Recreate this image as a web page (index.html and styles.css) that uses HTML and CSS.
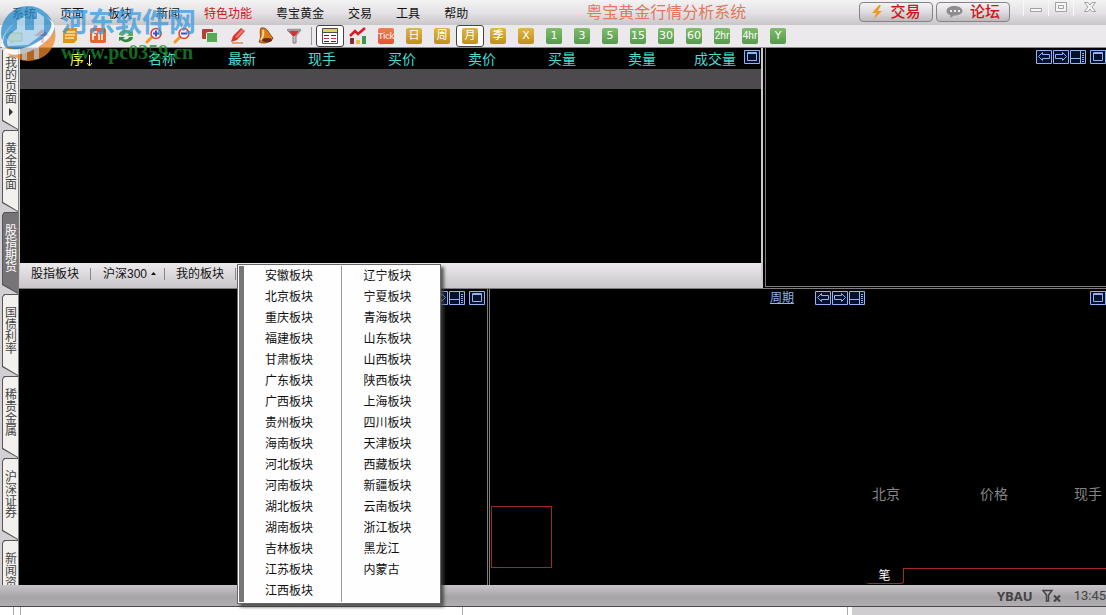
FILE: index.html
```html
<!DOCTYPE html>
<html lang="zh-CN">
<head>
    <meta charset="UTF-8">
    <meta name="viewport" content="width=device-width, initial-scale=1.0">
    <title>粤宝黄金行情分析系统</title>
    <link rel="stylesheet" href="styles.css">
</head>
<body>
    <!-- shared symbols -->
    <svg class="symbols" aria-hidden="true">
        <symbol id="i-prev" viewBox="0 0 16 14"><path d="M.5.5h15v13H.5zM2.500 6.500l4-4v2h7v4h-7v2z"/></symbol>
        <symbol id="i-next" viewBox="0 0 16 14"><path d="M.5.5h15v13H.5zM13.500 6.500l-4-4v2h-7v4h7v2z"/></symbol>
        <symbol id="i-split" viewBox="0 0 16 14"><path d="M.5.5h15v13H.5zM1 8.500h9.500M10.500 1v12M12 3.500h2M12 5.500h2M12 7.500h2M12 9.500h2M12 11.500h2"/></symbol>
        <symbol id="i-max" viewBox="0 0 16 14"><path d="M.5.5h15v13H.5zM3.500 2.500h9v8h-9zM3.500 3.500h9"/></symbol>
    </svg>

    <header class="titlebar">
        <nav class="menu">
            <button>系统</button>
            <button>页面</button>
            <button>板块</button>
            <button>新闻</button>
            <button class="hot">特色功能</button>
            <button>粤宝黄金</button>
            <button>交易</button>
            <button>工具</button>
            <button>帮助</button>
        </nav>
        <h1>粤宝黄金行情分析系统</h1>
        <div class="actions">
            <button class="pill">
                <svg width="12" height="16" viewBox="0 0 12 16"><path d="M8 1L1 9h4l-2 6 8-8H7l3-6z" fill="#f09a28"/></svg>
                交易
            </button>
            <button class="pill">
                <svg width="17" height="14" viewBox="0 0 17 14"><path d="M8.500 1C4 1 .5 3 .5 6c0 2 1.500 3.500 4 4.200L4 13l4-2.500c5 0 8.500-1.800 8.500-4.500S13 1 8.500 1z" fill="#8e8c8e"/><path d="M4 5h2v2H4zM8 5h2v2H8zM12 5h2v2h-2z" fill="#eee"/></svg>
                论坛
            </button>
        </div>
        <div class="window-controls">
            <button aria-label="最小化"><svg width="14" height="14" viewBox="0 0 14 14"><path d="M1.500 8.500h11v3h-11z"/></svg></button>
            <button aria-label="最大化"><svg width="14" height="14" viewBox="0 0 14 14"><path d="M1.500 2.500h11v9h-11zM4.500 5.500h5v3h-5z"/></svg></button>
            <button aria-label="关闭"><svg width="14" height="14" viewBox="0 0 14 14"><path d="M1.500 2.500h3.500l2 2.500 2-2.500h3.500L9 7l3.500 4.500H9L7 9l-2 2.500H1.500L5 7z"/></svg></button>
        </div>
    </header>

    <div class="toolbar">
        <button aria-label="返回"><svg width="18" height="18" viewBox="0 0 18 18"><path d="M1 9l6-5v2h10v8H7v2z" fill="#d8d880" stroke="#7a9440"/></svg></button>
        <button aria-label="主页"><svg width="18" height="18" viewBox="0 0 18 18"><path d="M3 9h12v7H3z" fill="#f2d8dc"/><path d="M9 2L1 9h16z" fill="#d04860"/><path d="M8 11h3v5H8z" fill="#a03048"/></svg></button>
        <button aria-label="公告"><svg width="18" height="18" viewBox="0 0 18 18"><path d="M4 1h12v12l-3 3H2V4z" fill="#e8921e"/><path d="M5 5h9M4 8h10M4 11h9" stroke="#fbe3a0" stroke-width="1.500"/></svg></button>
        <button aria-label="F10"><svg width="18" height="18" viewBox="0 0 18 18"><rect x="1" y="1" width="16" height="15" rx="2" fill="#e8662c"/><path d="M4 13V5h4M4 8h3M10 5v8M13 5v8" fill="none" stroke="#fff" stroke-width="1.500"/></svg></button>
        <button aria-label="刷新"><svg width="18" height="18" viewBox="0 0 18 18"><path d="M2 8c0-5 9-7 12-3l2-1v5h-6l2-2c-3-2-6 0-6 2z" fill="#57b04c"/><path d="M16 10c0 5-9 7-12 3l-2 1V10h6l-2 2c3 1 6 0 6-2z" fill="#2e8b3c"/></svg></button>
        <button aria-label="放大"><svg width="18" height="18" viewBox="0 0 18 18"><path d="M7 10l-5 5" stroke="#f09a28" stroke-width="3" stroke-linecap="round"/><circle cx="11" cy="6.500" r="5" fill="#f6eef2" stroke="#d8403c" stroke-width="1.500"/><path d="M11 3.500v6M8 6.500h6" stroke="#3858b8" stroke-width="2"/></svg></button>
        <button aria-label="缩小"><svg width="18" height="18" viewBox="0 0 18 18"><path d="M7 10l-5 5" stroke="#f09a28" stroke-width="3" stroke-linecap="round"/><circle cx="11" cy="6.500" r="5" fill="#f6eef2" stroke="#d8403c" stroke-width="1.500"/><path d="M8 6.500h6" stroke="#3858b8" stroke-width="2"/></svg></button>
        <button aria-label="叠加"><svg width="18" height="18" viewBox="0 0 18 18"><rect x="1" y="2" width="11" height="10" rx="1" fill="#b8403c"/><rect x="5.500" y="5.500" width="11" height="10" rx="1" fill="#58a858" stroke="#e4f0e0"/></svg></button>
        <button aria-label="画线"><svg width="18" height="18" viewBox="0 0 18 18"><path d="M12 1l4 3-8 9-6 2 2-6z" fill="#d83430"/><path d="M13 2l2 2-7 7-2-1z" fill="#f07860"/><path d="M3 16h11" stroke="#e8a070" stroke-width="2"/></svg></button>
        <button aria-label="预警"><svg width="18" height="18" viewBox="0 0 18 18"><path d="M4 1c7-1 7 5 12 10-2 5-10 6-14 4 3-5 0-10 2-14z" fill="#d87c1c" stroke="#8e4818"/><path d="M6 3c1 4 0 7-2 10" fill="none" stroke="#fbd48c" stroke-width="2"/><ellipse cx="10" cy="13" rx="5" ry="2" fill="#6a2c18"/></svg></button>
        <button aria-label="筛选"><svg width="18" height="18" viewBox="0 0 18 18"><path d="M2 3l6 6v7h3V9l5-6z" fill="#c4c0c4" stroke="#868286"/><path d="M4 4h10l-4 5H8z" fill="#d83038"/><path d="M2 2.500h14" stroke="#999" stroke-width="1.500"/></svg></button>
        <span class="separator"></span>
        <button class="on" aria-label="报价列表"><svg width="18" height="18" viewBox="0 0 18 18"><path d="M1.500 1.500h15v15h-15z" fill="#fff" stroke="#48504c"/><path d="M2 2h14v3H2z" fill="#e4d448"/><path d="M1 5.500h16" stroke="#48504c"/><path d="M3 8.500h5M10 8.500h5M3 14.500h5M10 14.500h5" stroke="#333"/><path d="M3 11.500h5M10 11.500h5" stroke="#d03838"/></svg></button>
        <button aria-label="走势图"><svg width="18" height="18" viewBox="0 0 18 18"><path d="M1 9l5-5 3 3 7-6" fill="none" stroke="#d81c28" stroke-width="2.500"/><path d="M1 11h4v6H1z" fill="#7c3040"/><path d="M7 13h4v4H7z" fill="#e8c040"/><path d="M13 9h4v8h-4z" fill="#3c9850"/></svg></button>
        <button><span class="tile tick">Tick</span></button>
        <button><span class="tile gold">日</span></button>
        <button><span class="tile gold">周</span></button>
        <button class="on"><span class="tile gold">月</span></button>
        <button><span class="tile gold">季</span></button>
        <button><span class="tile gold">X</span></button>
        <button><span class="tile">1</span></button>
        <button><span class="tile">3</span></button>
        <button><span class="tile">5</span></button>
        <button><span class="tile">15</span></button>
        <button><span class="tile">30</span></button>
        <button><span class="tile">60</span></button>
        <button><span class="tile small">2hr</span></button>
        <button><span class="tile small">4hr</span></button>
        <button><span class="tile">Y</span></button>
    </div>

    <main class="workspace">
        <nav class="side-tabs">
            <button class="first"><span>我的页面</span><i></i></button>
            <button><span>黄金页面</span></button>
            <button class="active"><span>股指期货</span></button>
            <button><span>国债利率</span></button>
            <button><span>稀贵金属</span></button>
            <button><span>沪深证券</span></button>
            <button><span>新闻资</span></button>
        </nav>

        <div class="panels">
            <div class="upper">
                <section class="quotes">
                    <div class="quote-area">
                        <table>
                            <thead>
                                <tr>
                                    <th class="sorted">序<svg width="7" height="12" viewBox="0 0 7 12"><path d="M3.500 0v11M1 8l2.500 3L6 8" fill="none" stroke="#ffff50"/></svg></th>
                                    <th>名称</th>
                                    <th>最新</th>
                                    <th>现手</th>
                                    <th>买价</th>
                                    <th>卖价</th>
                                    <th>买量</th>
                                    <th>卖量</th>
                                    <th>成交量</th>
                                    <td class="tools"><button aria-label="最大化窗格"><svg class="tool" width="16" height="14"><use href="#i-max"/></svg></button></td>
                                </tr>
                            </thead>
                            <tbody>
                                <tr><td colspan="10"></td></tr>
                            </tbody>
                        </table>
                    </div>
                    <div class="sector-bar">
                        <button>股指板块</button>
                        <button>沪深300<i></i></button>
                        <button>我的板块</button>
                        <div class="region-menu">
                            <ul>
                                <li><button>安徽板块</button></li>
                                <li><button>北京板块</button></li>
                                <li><button>重庆板块</button></li>
                                <li><button>福建板块</button></li>
                                <li><button>甘肃板块</button></li>
                                <li><button>广东板块</button></li>
                                <li><button>广西板块</button></li>
                                <li><button>贵州板块</button></li>
                                <li><button>海南板块</button></li>
                                <li><button>河北板块</button></li>
                                <li><button>河南板块</button></li>
                                <li><button>湖北板块</button></li>
                                <li><button>湖南板块</button></li>
                                <li><button>吉林板块</button></li>
                                <li><button>江苏板块</button></li>
                                <li><button>江西板块</button></li>
                            </ul>
                            <ul>
                                <li><button>辽宁板块</button></li>
                                <li><button>宁夏板块</button></li>
                                <li><button>青海板块</button></li>
                                <li><button>山东板块</button></li>
                                <li><button>山西板块</button></li>
                                <li><button>陕西板块</button></li>
                                <li><button>上海板块</button></li>
                                <li><button>四川板块</button></li>
                                <li><button>天津板块</button></li>
                                <li><button>西藏板块</button></li>
                                <li><button>新疆板块</button></li>
                                <li><button>云南板块</button></li>
                                <li><button>浙江板块</button></li>
                                <li><button>黑龙江</button></li>
                                <li><button>内蒙古</button></li>
                            </ul>
                        </div>
                    </div>
                </section>
                <section class="side-chart">
                    <div class="pane-tools">
                        <button aria-label="后退"><svg class="tool" width="16" height="14"><use href="#i-prev"/></svg></button>
                        <button aria-label="前进"><svg class="tool" width="16" height="14"><use href="#i-next"/></svg></button>
                        <button aria-label="分栏"><svg class="tool" width="16" height="14"><use href="#i-split"/></svg></button>
                        <button class="max" aria-label="最大化窗格"><svg class="tool" width="16" height="14"><use href="#i-max"/></svg></button>
                    </div>
                </section>
            </div>

            <div class="lower">
                <section class="chart-left">
                    <div class="pane-tools">
                        <button aria-label="后退"><svg class="tool" width="16" height="14"><use href="#i-prev"/></svg></button>
                        <button aria-label="前进"><svg class="tool" width="16" height="14"><use href="#i-next"/></svg></button>
                        <button aria-label="分栏"><svg class="tool" width="16" height="14"><use href="#i-split"/></svg></button>
                        <button class="max" aria-label="最大化窗格"><svg class="tool" width="16" height="14"><use href="#i-max"/></svg></button>
                    </div>
                </section>
                <section class="chart-right">
                    <div class="chart-column">
                        <div class="pane-tools">
                            <a href="#">周期</a>
                            <button aria-label="后退"><svg class="tool" width="16" height="14"><use href="#i-prev"/></svg></button>
                            <button aria-label="前进"><svg class="tool" width="16" height="14"><use href="#i-next"/></svg></button>
                            <button aria-label="分栏"><svg class="tool" width="16" height="14"><use href="#i-split"/></svg></button>
                        </div>
                        <div class="marker"></div>
                    </div>
                    <div class="detail">
                        <div class="pane-tools">
                            <button aria-label="最大化窗格"><svg class="tool" width="16" height="14"><use href="#i-max"/></svg></button>
                        </div>
                        <div class="ticks-head"><span>北京</span><span>价格</span><span>现手</span></div>
                        <div class="detail-tabs"><button>笔</button><span></span></div>
                    </div>
                </section>
            </div>
        </div>
    </main>

    <footer class="statusbar">
        <b>YBAU</b>
        <svg width="19" height="14" viewBox="0 0 19 14"><path d="M1 1.500h9L6.500 6v6h-2V6z" fill="none" stroke="#444" stroke-width="1.500"/><path d="M12 6.500l6 6M18 6.500l-6 6" stroke="#444" stroke-width="2"/></svg>
        <time>13:45</time>
    </footer>
    <div class="under-strip"><span></span><span></span><span></span><span></span><span></span></div>

    <div class="watermark">
        <svg width="58" height="60" viewBox="0 0 58 60">
            <circle cx="28" cy="29" r="27" fill="#2a8fd0"/>
            <path d="M12 49c18 2 34-8 43-23 3 17-10 31-27 31-7 0-12-3-16-8z" fill="#f0892a"/>
            <path d="M4 43l10 2v10c-5-3-8-7-10-12z" fill="#f0892a"/>
            <path d="M17 17C5 26 0 38 5 43c8 7 33-1 43-14 6-8 4-14-4-16 10 3 13 8 8 17-9 15-36 26-47 18C-3 42 4 26 17 17z" fill="#fff"/>
            <path d="M17 17l8-5v14h9V15h3V8l7 5v16L28 41 8 42C5 36 9 30 17 25z" fill="#fff" opacity=".6"/>
            <path d="M22 47h5v9h-5zM34 43h5v12h-5z" fill="#fff" opacity=".8"/>
        </svg>
        <div>
            <strong>河东软件网</strong>
            <em>www.pc0359.cn</em>
        </div>
    </div>
</body>
</html>
```
FILE: styles.css
```css
:root {
    --line: #7e7c7e;
    --tool: #8fb4f0;
    --cyan: #48dcd4;
    --red: #a02828;
}

* {
    margin: 0;
    padding: 0;
    box-sizing: border-box;
}

body {
    display: flex;
    flex-direction: column;
    height: 100vh;
    overflow: hidden;
    position: relative;
    background: #000;
    color: #111;
    font: 12px/16px "Liberation Sans", "Noto Sans CJK SC", sans-serif;
}

button {
    border: none;
    background: none;
    font: inherit;
    color: inherit;
    white-space: nowrap;
}

svg {
    display: block;
}

.symbols {
    position: absolute;
    width: 0;
    height: 0;
}

/* title bar */
.titlebar {
    display: flex;
    height: 25px;
    background: linear-gradient(#f4f3f4, #e4e2e4 50%, #c8c6c8);
}

.menu {
    display: flex;
}

.menu button {
    padding: 2px 12px 0;
}

.menu .hot {
    color: #c81820;
}

.titlebar h1 {
    flex: 1;
    padding-left: 106px;
    font-size: 16px;
    font-weight: 400;
    line-height: 25px;
    color: #e2785c;
    white-space: nowrap;
}

.actions {
    display: flex;
    gap: 3px;
    padding: 2px 13px 0 0;
}

.pill {
    display: flex;
    align-items: center;
    justify-content: center;
    gap: 7px;
    width: 74px;
    height: 20px;
    border: 1px solid #858385;
    border-radius: 4px;
    background: linear-gradient(#f4f2f4, #dedcde 50%, #bcbabc);
    color: #d01418;
    font-size: 15px;
    font-weight: 500;
}

.window-controls {
    display: flex;
}

.window-controls button {
    display: flex;
    justify-content: center;
    width: 25px;
    height: 16px;
    border-left: 1px solid #f8f8f8;
}

.window-controls button:last-child {
    width: 33px;
}

.window-controls path {
    fill: #f6f6f6;
    stroke: #a2a0a2;
}

/* toolbar */
.toolbar {
    display: flex;
    height: 23px;
    background: #ebe9eb;
    border-bottom: 1px solid #8a888a;
}

.toolbar button {
    display: flex;
    align-items: center;
    justify-content: center;
    width: 28px;
    height: 22px;
}

.toolbar .on {
    border: 1px solid #444;
    border-radius: 3px;
    background: #fff;
}

.separator {
    width: 1px;
    margin: 2px 4px 2px 3px;
    background: #999;
}

.tile {
    width: 16px;
    height: 16px;
    border-radius: 2px;
    background: linear-gradient(#80bc6c, #559a4c);
    color: #fff;
    font: 11px/16px "DejaVu Sans", "Noto Sans CJK SC", sans-serif;
}

.tile.gold {
    background: linear-gradient(#dcb848, #c09018);
}

.tile.tick {
    background: linear-gradient(#f08050, #e85030);
    font: 9px/16px "Liberation Sans", sans-serif;
}

.tile.small {
    font: 10px/16px "Liberation Sans", sans-serif;
}

/* work area */
.workspace {
    flex: 1;
    display: flex;
    min-height: 0;
}

.side-tabs {
    flex: none;
    width: 19px;
    padding-left: 2px;
    overflow: hidden;
    background: #d2d0d4;
    border-right: 1px solid var(--line);
}

.side-tabs button {
    display: flex;
    flex-direction: column;
    align-items: flex-start;
    justify-content: flex-start;
    position: relative;
    width: 16px;
    height: 82px;
    padding: 13px 0 0 3px;
    background: #555;
    clip-path: polygon(0 3px, 2px 0, 100% 0, 100% 100%, 0 73px);
    color: #444;
    text-align: left;
}

.side-tabs button::before {
    content: '';
    position: absolute;
    inset: 1px 0 1px 1px;
    background: #f2f1ee;
    clip-path: polygon(0 2px, 2px 0, 100% 0, 100% 100%, 0 71px);
}

.side-tabs .active {
    color: #fff;
}

.side-tabs .active::before {
    background: #777477;
}

.side-tabs span {
    display: block;
    position: relative;
    width: 12px;
    line-height: 12px;
    white-space: normal;
    word-break: break-all;
}

.side-tabs .first {
    padding-top: 9px;
}

.side-tabs i {
    display: block;
    position: relative;
    margin: 3px 0 0 4px;
    width: 4px;
    height: 8px;
    background: #333;
    clip-path: polygon(0 0, 100% 50%, 0 100%);
}

.panels {
    flex: 1;
    display: flex;
    flex-direction: column;
    min-width: 0;
}

.upper {
    flex: 240;
    display: grid;
    grid-template-columns: 744fr 341fr;
    gap: 2px;
    min-height: 0;
    background: #000;
}

.quotes {
    display: flex;
    flex-direction: column;
    border: solid #cccacc;
    border-width: 0 2px 0 1px;
}

.quote-area {
    flex: 1;
}

.quotes table {
    width: 100%;
    table-layout: fixed;
    border-collapse: collapse;
}

.quotes th {
    width: 80px;
    height: 21px;
    color: var(--cyan);
    font-size: 14px;
    font-weight: 400;
    line-height: 20px;
    text-align: right;
    padding-right: 4px;
}

.quotes th.sorted {
    color: #ffff50;
    padding-right: 7px;
}

.sorted svg {
    display: inline-block;
    margin-left: 2px;
    vertical-align: -3px;
}

.tools {
    vertical-align: top;
    padding-top: 2px;
}

.tools button {
    display: block;
    margin: 0 1px 0 auto;
}

.quotes tbody td {
    height: 20px;
    background: #4c4a4c;
}

.tool {
    fill: none;
    stroke: var(--tool);
    background: #04102c;
}

.sector-bar {
    display: flex;
    align-items: center;
    height: 25px;
    padding-bottom: 3px;
    position: relative;
    background: linear-gradient(#eceaec, #c8c6c8);
}

.sector-bar > button {
    display: flex;
    align-items: center;
    height: 12px;
    padding: 0 11px;
    border-right: 1px solid #888;
}

.sector-bar > button:nth-child(2) {
    padding: 0 8px 0 12px;
}

.sector-bar i {
    margin-left: 4px;
    width: 5px;
    height: 3px;
    background: #111;
    clip-path: polygon(50% 0, 100% 100%, 0 100%);
}

.region-menu {
    position: absolute;
    top: 1px;
    left: 217px;
    z-index: 2;
    display: flex;
    width: 204px;
    padding: 1px;
    border: 1px solid #6a686a;
    background: #fefefe;
    box-shadow: 3px 3px 3px rgba(60, 60, 60, 0.8);
}

.region-menu ul {
    flex: 1;
    padding-left: 22px;
    list-style: none;
    border-left: 1px solid #999;
}

.region-menu ul:first-child {
    border-left: 5px solid #777577;
    padding-left: 21px;
}

.region-menu li {
    height: 21px;
}

.region-menu button {
    display: block;
    line-height: 20px;
}

.side-chart {
    border: solid var(--line);
    border-width: 0 0 1px 1px;
    margin-bottom: 1px;
}

.pane-tools {
    display: flex;
    justify-content: flex-end;
    gap: 1px;
    padding-top: 2px;
}

.pane-tools .max {
    margin-left: 3px;
}

.lower {
    flex: 297;
    display: grid;
    grid-template-columns: 469fr 616fr;
    gap: 1px;
    min-height: 0;
    border-top: 1px solid var(--line);
}

.chart-left {
    border-right: 1px solid var(--line);
}

.chart-left .pane-tools {
    padding-right: 2px;
}

.chart-right {
    display: flex;
    border-left: 1px solid var(--line);
}

.chart-column {
    flex: 1;
    display: flex;
    flex-direction: column;
    justify-content: space-between;
    padding: 0 0 17px 1px;
}

.chart-column .pane-tools {
    padding-right: 1px;
}

.chart-column a {
    margin-right: 20px;
    color: var(--tool);
    line-height: 14px;
}

.marker {
    width: 61px;
    height: 62px;
    border: 1px solid var(--red);
}

.detail {
    display: flex;
    flex-direction: column;
    width: 240px;
}

.ticks-head {
    display: flex;
    margin-top: auto;
    padding: 0 4px 66px 6px;
    color: #858385;
    font-size: 14px;
}

.ticks-head span:nth-child(2) {
    flex: 1;
    padding-right: 66px;
    text-align: right;
}

.detail-tabs {
    display: flex;
    height: 16px;
    margin-bottom: 1px;
}

.detail-tabs button {
    width: 38px;
    border: solid var(--red);
    border-width: 0 1px 1px 0;
    border-radius: 0 0 3px 3px;
    color: #fff;
    line-height: 14px;
}

.detail-tabs span {
    flex: 1;
    border-top: 1px solid var(--red);
}

/* status bar */
.statusbar {
    display: flex;
    align-items: center;
    justify-content: flex-end;
    gap: 9px;
    height: 22px;
    border-bottom: 1px solid #4a484a;
    background: linear-gradient(#c6c4c6, #a6a4a6 60%, #b0aeb0);
    color: #444;
    font-size: 13px;
}

.statusbar b {
    font: bold 13px/20px "Open Sans", sans-serif;
}

.statusbar time {
    padding-left: 4px;
    font-family: Roboto, sans-serif;
}

.under-strip {
    display: grid;
    grid-template-columns: 14px 7px 442fr 385fr 258fr;
    height: 8px;
    background: #fff;
}

.under-strip span {
    border-right: 1px solid #aaa;
}

.under-strip span:last-child {
    border: none;
    border-left: 4px solid #fff;
    background: #cfcdcf;
}

/* watermark over the top left corner */
.watermark {
    position: absolute;
    top: 4px;
    left: 0;
    z-index: 3;
    display: flex;
    gap: 3px;
    opacity: 0.75;
    pointer-events: none;
}

.watermark strong {
    display: block;
    color: #3a9ae0;
    font-size: 27px;
    line-height: 38px;
    font-weight: 700;
}

.watermark em {
    display: block;
    color: #1c8c2c;
    font: bold 20px/20px "Liberation Serif", serif;
}
```
